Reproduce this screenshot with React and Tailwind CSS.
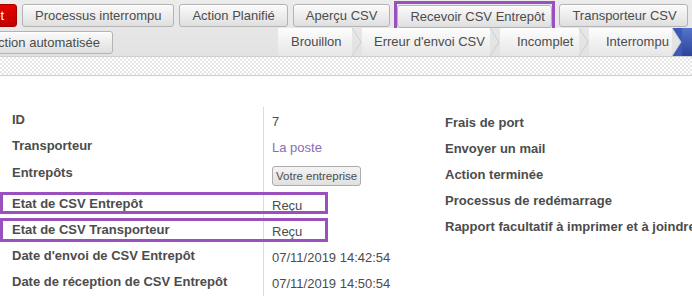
import React from 'react';

const font = "font-['Liberation_Sans',Arial,sans-serif]";

function Btn({ children, className = '' }) {
  return (
    <button
      type="button"
      className={`h-[23px] shrink-0 whitespace-nowrap rounded-[3px] border border-[#b3b3b3] bg-gradient-to-b from-[#fbfbfb] to-[#dfdfdf] px-3 text-[13px] leading-none text-[#4c4c4c] shadow-[inset_0_1px_0_#fff] ${className}`}
    >
      {children}
    </button>
  );
}

function Chevron({ active }) {
  return (
    <svg width="10" height="28" viewBox="0 0 10 28" className="shrink-0">
      {active && <polygon points="0,0 10,0 10,28 0,28 9,14" fill="#3d5ab8" />}
      <polyline points="0,0 9,14 0,28" fill="none" stroke="#cfcfcf" strokeWidth="1" />
    </svg>
  );
}

function Stage({ label, w, pl }) {
  return (
    <div className={`flex h-full shrink-0 items-center bg-gradient-to-b from-[#fdfdfd] to-[#e6e6e6] text-[13px] text-[#4c4c4c] ${w} ${pl}`}>
      {label}
    </div>
  );
}

const leftRows = [
  { label: 'ID', value: '7' },
  { label: 'Transporteur', value: 'La poste', link: true },
  { label: 'Entrepôts', tag: 'Votre entreprise', tall: true },
  { label: 'Etat de CSV Entrepôt', value: 'Reçu', box: 'top-[1px] h-[22px]' },
  { label: 'Etat de CSV Transporteur', value: 'Reçu', box: 'top-[1px] h-[24px]' },
  { label: "Date d'envoi de CSV Entrepôt", value: '07/11/2019 14:42:54' },
  { label: 'Date de réception de CSV Entrepôt', value: '07/11/2019 14:50:54' },
];

const rightRows = [
  'Frais de port',
  'Envoyer un mail',
  'Action terminée',
  'Processus de redémarrage',
  'Rapport facultatif à imprimer et à joindre',
];

export default function App() {
  return (
    <div className={`${font} h-[296px] w-[692px] overflow-hidden bg-white`}>
      {/* control panel */}
      <div className="bg-gradient-to-b from-[#ececec] to-[#e2e2e2]">
        <div className="flex h-[28px] items-start gap-[5px] overflow-hidden pt-[4px]">
          <div className="flex w-[17px] shrink-0 justify-end overflow-hidden">
            <button
              type="button"
              className="h-[23px] shrink-0 whitespace-nowrap rounded-[3px] border border-[#a30000] bg-gradient-to-b from-[#e40000] to-[#c20000] px-3 text-[13px] leading-none text-white"
            >
              Reset
            </button>
          </div>
          <Btn>Processus interrompu</Btn>
          <Btn>Action Planifié</Btn>
          <Btn>Aperçu CSV</Btn>
          <div className="relative mx-[2px] shrink-0">
            <Btn className="w-[155px]">Recevoir CSV Entrepôt</Btn>
            <span className="pointer-events-none absolute -inset-[3px] border-[3px] border-[#9b50c0]" />
          </div>
          <Btn className="w-[129px]">Transporteur CSV</Btn>
          <Btn>Envoyer CSV</Btn>
        </div>
        <div className="flex h-[28px] items-stretch">
          <div className="flex w-[278px] shrink-0 items-start pt-[3px]">
            <div className="flex w-[113px] shrink-0 justify-end overflow-hidden">
              <Btn className="h-[22px]">Action automatisée</Btn>
            </div>
          </div>
          <div className="flex h-full flex-1 items-stretch overflow-hidden">
            <Stage label="Brouillon" w="w-[74px]" pl="pl-[13px]" />
            <Chevron />
            <Stage label="Erreur d'envoi CSV" w="w-[128px]" pl="pl-[12px]" />
            <Chevron />
            <Stage label="Incomplet" w="w-[79px]" pl="pl-[17px]" />
            <Chevron />
            <Stage label="Interrompu" w="w-[83px]" pl="pl-[17px]" />
            <Chevron active />
            <div className="flex h-full flex-1 items-center bg-gradient-to-b from-[#5574cc] to-[#2c449c] pl-3 text-[13px] text-white">
              Envoyé
            </div>
          </div>
        </div>
      </div>

      {/* dotted strip */}
      <div className="h-[20px] border-y border-[#cfcfcf] bg-[repeating-conic-gradient(#e6e6e6_0_25%,#ffffff_0_50%)] bg-[length:4px_4px]" />

      {/* form sheet */}
      <div className="flex text-[13px] leading-[18px] text-[#4c4c4c]">
        <div className="w-[440px] shrink-0 pt-[31px]">
          {leftRows.map((r) => (
            <div key={r.label} className={`relative flex ${r.tall ? 'h-[32px]' : 'h-[26px]'}`}>
              <div className={`w-[263px] shrink-0 pl-3 font-bold ${r.tall ? 'pt-[5px]' : 'pt-[4px]'}`}>{r.label}</div>
              <div className={`flex-1 border-l border-[#dcdcdc] pl-2 ${r.tag ? 'pt-[7px]' : 'pt-[6px]'}`}>
                {r.tag ? (
                  <span className="inline-flex h-[20px] items-center rounded-[3px] border border-[#adadad] bg-gradient-to-b from-[#f4f4f4] to-[#e0e0e0] px-[3px] text-[11.5px]">
                    {r.tag}
                  </span>
                ) : (
                  <span className={r.link ? 'text-[#8a6cb6]' : ''}>{r.value}</span>
                )}
              </div>
              {r.box && (
                <span className={`pointer-events-none absolute left-0 w-[328px] border-[3px] border-[#9b50c0] ${r.box}`} />
              )}
            </div>
          ))}
          <div className="ml-[263px] h-[20px] border-l border-[#dcdcdc]" />
        </div>
        <div className="flex-1 pl-[5px] pt-[34px]">
          {rightRows.map((l) => (
            <div key={l} className="h-[26px] whitespace-nowrap pt-[4px] font-bold">
              {l}
            </div>
          ))}
        </div>
      </div>
    </div>
  );
}
